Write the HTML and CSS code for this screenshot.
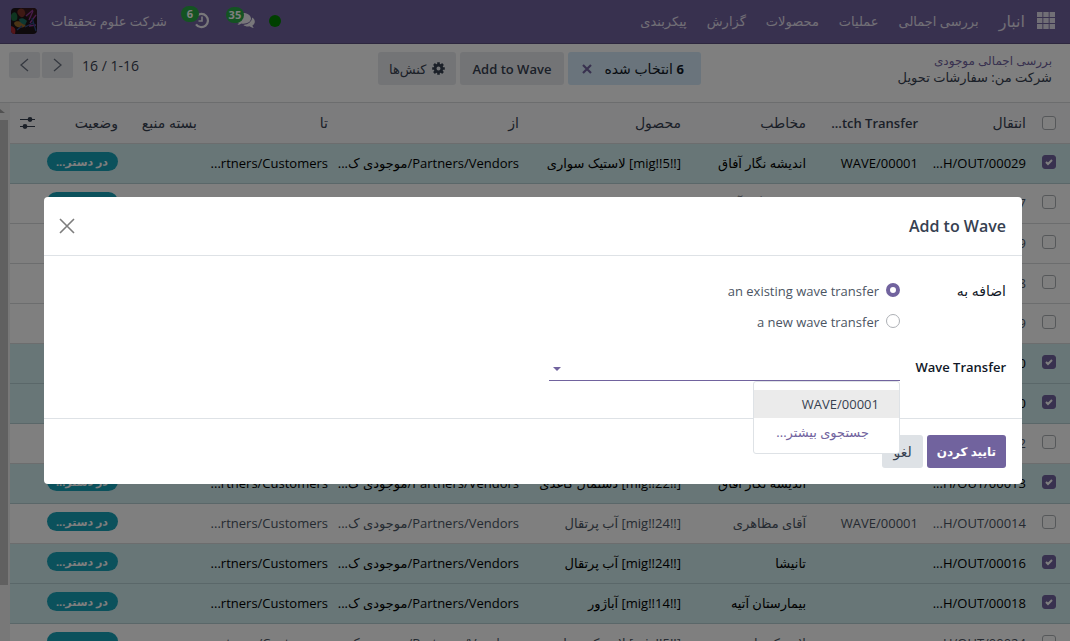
FILE: index.html
```html
<!DOCTYPE html>
<html lang="fa" dir="rtl">
<head>
<meta charset="utf-8">
<title>انبار</title>
<link rel="stylesheet" href="styles.css">
</head>
<body>
<div class="app">
<header class="navbar">
  <button class="apps" aria-label="برنامه‌ها"><svg width="18" height="17" viewBox="0 0 18 17"><path fill="currentColor" d="M0 0h5.400v5H0zM6.300 0h5.400v5H6.300zM12.600 0H18v5h-5.400zM0 6h5.400v5H0zM6.300 6h5.400v5H6.300zM12.600 6H18v5h-5.400zM0 12h5.400v5H0zM6.300 12h5.400v5H6.300zM12.600 12H18v5h-5.400z"/></svg></button>
  <a class="brand" href="#">انبار</a>
  <nav class="menu">
    <a href="#">بررسی اجمالی</a>
    <a href="#">عملیات</a>
    <a href="#">محصولات</a>
    <a href="#">گزارش</a>
    <a href="#">پیکربندی</a>
  </nav>
  <div class="systray">
    <span class="online"></span>
    <button class="tray" aria-label="پیام‌ها"><svg width="19" height="16" viewBox="0 0 19 16"><path fill="currentColor" d="M7.500 0C3.400 0 0 2.500 0 5.600c0 1.800 1.100 3.300 2.800 4.300-.3.900-.8 1.500-1.400 2.100 1.600 0 3-.6 4-1.400.7.100 1.400.2 2.100.2 4.100 0 7.500-2.300 7.500-5.200S11.600 0 7.500 0z"/><path fill="currentColor" d="M16 4.600c.2 4-4 7.100-8.600 7.300 1.200 1 2.900 1.600 4.900 1.500l1.200-.1c1.100.9 2.500 1.500 4.300 1.600-.7-.7-1.200-1.400-1.400-2.300 3.300-2 3.300-6-.4-8z"/></svg><span class="count">35</span></button>
    <button class="tray" aria-label="فعالیت‌ها"><svg width="17" height="17" viewBox="0 0 17 17"><path fill="none" stroke="currentColor" stroke-width="2.200" d="M3.500 4A6.600 6.600 0 1 1 3 12.300"/><path fill="none" stroke="currentColor" stroke-width="1.600" d="M9 4.500V9H5.500"/></svg><span class="count">6</span></button>
    <a class="company" href="#">شرکت علوم تحقیقات</a>
    <svg class="avatar" width="26" height="26" viewBox="0 0 26 26"><rect width="26" height="26" fill="#1d1418"/><path d="M12 0h14v8l-7 3-6-4z" fill="#35191f"/><path d="M0 7c3-4 5-3 6 0s0 6-3 6-3-3-3-6z" fill="#1f6b41"/><path d="M7 2c4-3 6-1 7 2s-2 6-4 5-5-4-3-7z" fill="#7c3228"/><path d="M3 15c3-3 5-1 8-1 3 1 5 4 2 5s-9 1-10-4z" fill="#96692b"/><path d="M0 18c4 1 5 3 4 8H0z" fill="#a82a35"/><path d="M8 11c4-2 6 0 8 2l-2 4c-3-1-6-3-6-6z" fill="#1c6f63"/><path d="M18 12l4-9M19 15l6-8M18 18l7-1M15 8l7-6" stroke="#8d3794" stroke-width="1.300" fill="none"/><path d="M14 19l8-4M21 10l4 13M6 22l5-4" stroke="#2f4a88" stroke-width="1.300" fill="none"/></svg>
  </div>
</header>

<section class="control">
  <div class="crumbs">
    <a href="#">بررسی اجمالی موجودی</a>
    <span>شرکت من: سفارشات تحویل</span>
  </div>
  <div class="actions">
    <div class="selection"><span><b>6</b> انتخاب شده</span><button aria-label="لغو انتخاب"><svg width="10" height="10" viewBox="0 0 10 10"><path d="M1 1l8 8M9 1L1 9" stroke="currentColor" stroke-width="2.200"/></svg></button></div>
    <button class="btn latin">Add to Wave</button>
    <button class="btn"><svg width="13" height="13" viewBox="-6.500 -6.500 13 13"><circle r="3.400" fill="none" stroke="currentColor" stroke-width="2.800"/><path d="M0-6.300V-4M0 6.300V4M-6.300 0H-4M6.300 0H4M-4.500-4.500L-3-3M4.500 4.500L3 3M-4.500 4.500L-3 3M4.500-4.500L3-3" stroke="currentColor" stroke-width="2.600"/></svg>کنش‌ها</button>
  </div>
  <div class="pager">
    <span>1-16 / 16</span>
    <div class="steps">
      <button aria-label="قبلی"><svg width="9" height="14" viewBox="0 0 9 14"><path d="M1 1l7 6-7 6" fill="none" stroke="currentColor" stroke-width="1.300"/></svg></button>
      <button aria-label="بعدی"><svg width="9" height="14" viewBox="0 0 9 14"><path d="M8 1L1 7l7 6" fill="none" stroke="currentColor" stroke-width="1.300"/></svg></button>
    </div>
  </div>
</section>

<main class="content">
<table class="list">
<colgroup><col class="c-check"><col class="c-name"><col class="c-batch"><col class="c-partner"><col class="c-product"><col class="c-from"><col class="c-to"><col class="c-package"><col class="c-state"><col class="c-options"></colgroup>
<thead><tr><th><input type="checkbox" aria-label="انتخاب همه"></th><th>انتقال</th><th class="latin">tch Transfer...</th><th>مخاطب</th><th>محصول</th><th>از</th><th>تا</th><th>بسته منبع</th><th>وضعیت</th><th><button class="options" aria-label="ستون‌ها"><svg width="15" height="12" viewBox="0 0 15 12"><path d="M0 2.500h15M0 9.500h15" stroke="currentColor" stroke-width="1.200"/><circle cx="10" cy="2.500" r="2.400" fill="currentColor"/><circle cx="5" cy="9.500" r="2.400" fill="currentColor"/></svg></button></th></tr></thead>
<tbody>
<tr class="selected"><td><input type="checkbox" aria-label="00029" checked></td><td>H/OUT/00029...</td><td>WAVE/00001</td><td>اندیشه نگار آفاق</td><td>[!!mig!!5] لاستیک سواری</td><td>Partners/Vendors/موجودی ک...</td><td>rtners/Customers...</td><td></td><td><span class="badge">در دستر...</span></td><td></td></tr>
<tr><td><input type="checkbox" aria-label="00007"></td><td>H/OUT/00007...</td><td></td><td>اندیشه نگار آفاق</td><td></td><td></td><td></td><td></td><td><span class="badge">در دستر...</span></td><td></td></tr>
<tr><td><input type="checkbox" aria-label="00009"></td><td>H/OUT/00009...</td><td></td><td></td><td></td><td></td><td></td><td></td><td></td><td></td></tr>
<tr><td><input type="checkbox" aria-label="00008"></td><td>H/OUT/00008...</td><td></td><td></td><td></td><td></td><td></td><td></td><td></td><td></td></tr>
<tr><td><input type="checkbox" aria-label="00019"></td><td>H/OUT/00019...</td><td></td><td></td><td></td><td></td><td></td><td></td><td></td><td></td></tr>
<tr class="selected"><td><input type="checkbox" aria-label="00020" checked></td><td>H/OUT/00020...</td><td></td><td></td><td></td><td></td><td></td><td></td><td></td><td></td></tr>
<tr class="selected"><td><input type="checkbox" aria-label="00010" checked></td><td>H/OUT/00010...</td><td></td><td></td><td></td><td></td><td></td><td></td><td></td><td></td></tr>
<tr><td><input type="checkbox" aria-label="00012"></td><td>H/OUT/00012...</td><td></td><td></td><td></td><td></td><td></td><td></td><td></td><td></td></tr>
<tr class="selected"><td><input type="checkbox" aria-label="00013" checked></td><td>H/OUT/00013...</td><td></td><td>اندیشه نگار آفاق</td><td>[!!mig!!22] دستمال کاغذی</td><td>Partners/Vendors/موجودی ک...</td><td>rtners/Customers...</td><td></td><td><span class="badge">در دستر...</span></td><td></td></tr>
<tr><td><input type="checkbox" aria-label="00014"></td><td>H/OUT/00014...</td><td>WAVE/00001</td><td>آقای مظاهری</td><td>[!!mig!!24] آب پرتقال</td><td>Partners/Vendors/موجودی ک...</td><td>rtners/Customers...</td><td></td><td><span class="badge">در دستر...</span></td><td></td></tr>
<tr class="selected"><td><input type="checkbox" aria-label="00016" checked></td><td>H/OUT/00016...</td><td></td><td>تانیشا</td><td>[!!mig!!24] آب پرتقال</td><td>Partners/Vendors/موجودی ک...</td><td>rtners/Customers...</td><td></td><td><span class="badge">در دستر...</span></td><td></td></tr>
<tr class="selected"><td><input type="checkbox" aria-label="00018" checked></td><td>H/OUT/00018...</td><td></td><td>بیمارستان آتیه</td><td>[!!mig!!14] آباژور</td><td>Partners/Vendors/موجودی ک...</td><td>rtners/Customers...</td><td></td><td><span class="badge">در دستر...</span></td><td></td></tr>
<tr><td><input type="checkbox" aria-label="00024"></td><td>H/OUT/00024...</td><td></td><td>لاستیک ما</td><td>[!!mig!!5] لاستیک سواری</td><td>Partners/Vendors/موجودی ک...</td><td>rtners/Customers...</td><td></td><td><span class="badge">در دستر...</span></td><td></td></tr>
</tbody>
</table>
<div class="scrollbar"><svg width="10" height="17" viewBox="0 0 10 17"><path d="M0 6l5 4H-5z" fill="#a3a3a3"/></svg><div class="thumb"></div></div>
</main>
</div>

<div class="overlay">
<form class="modal" role="dialog" aria-labelledby="modal-title">
  <header class="modal-head">
    <h1 id="modal-title">Add to Wave</h1>
    <button type="button" class="close" aria-label="بستن"><svg width="16" height="16" viewBox="0 0 16 16"><path d="M1 1l14 14M15 1L1 15" stroke="currentColor" stroke-width="1.600"/></svg></button>
  </header>
  <div class="modal-body">
    <span class="label" id="mode">اضافه به</span>
    <div class="radios" role="radiogroup" aria-labelledby="mode">
      <label><input type="radio" name="mode" checked>an existing wave transfer</label>
      <label><input type="radio" name="mode">a new wave transfer</label>
    </div>
    <label class="label latin" for="wave">Wave Transfer</label>
    <div class="combo">
      <input id="wave" type="text" autocomplete="off">
      <svg class="caret" width="8" height="4" viewBox="0 0 8 4"><path d="M0 0h8L4 4z" fill="currentColor"/></svg>
      <ul class="dropdown">
        <li><a class="option active" href="#">WAVE/00001</a></li>
        <li><a class="option more" href="#">جستجوی بیشتر...</a></li>
      </ul>
    </div>
  </div>
  <footer class="modal-foot">
    <button type="submit" class="btn primary">تایید کردن</button>
    <button type="button" class="btn cancel">لغو</button>
  </footer>
</form>
</div>
</body>
</html>
```
FILE: styles.css
```css
* { box-sizing: border-box; }
body {
  margin: 0;
  font: 13px/20px "Open Sans", "DejaVu Sans", sans-serif;
  color: #111827;
  background: #fff;
}
a { color: inherit; text-decoration: none; }
button { font: inherit; color: inherit; border: 0; padding: 0; background: none; }
svg { display: block; flex: none; }
input { margin: 0; }

.app { height: 100vh; overflow: hidden; display: flex; flex-direction: column; }

.navbar {
  flex: none;
  height: 44px;
  display: flex;
  align-items: center;
  padding: 0 15px 2px 11px;
  background: #71639e;
  border-bottom: 1px solid #5a4f7f;
  color: #e2dfec;
}
.brand { font-size: 16px; margin: 0 12px 0 20px; }
.menu { display: flex; gap: 20px; }
.systray { margin-right: auto; display: flex; align-items: center; gap: 14px; }
.online { width: 12px; height: 12px; border-radius: 50%; background: #008000; }
.tray { position: relative; margin-left: 12px; color: #f0eff5; }
.count {
  position: absolute;
  top: -6px;
  right: 11px;
  min-width: 18px;
  padding: 0 2px;
  border-radius: 8px;
  background: #28a745;
  color: #fff;
  font: bold 11px/16px "Open Sans", sans-serif;
}
.avatar { border-radius: 4px; }

.control {
  flex: none;
  height: 59px;
  display: grid;
  grid-template-columns: 1fr auto 1fr;
  padding: 8px 18px 0 9px;
  border-bottom: 1px solid #d8dadd;
}
.crumbs { display: flex; flex-direction: column; line-height: 17px; }
.crumbs a { color: #71639e; font-size: 12px; font-weight: 500; -webkit-text-stroke: 1px #71639e; paint-order: stroke; }
.crumbs a { -webkit-text-stroke: 0; }
.crumbs span { color: #374151; }
.actions { display: flex; gap: 4px; height: 33px; margin-left: 18px; }
.selection {
  display: flex;
  align-items: center;
  gap: 12px;
  padding: 0 17px 0 14px;
  border-radius: 3px;
  background: #d4e9f8;
  font-size: 14px;
}
.selection b { font-size: 13px; }
.selection button { color: #71639e; }
.btn {
  height: 33px;
  display: flex;
  align-items: center;
  gap: 5px;
  padding: 0 11px;
  border-radius: 3px;
  background: #e7e9ed;
  color: #374151;
  font-weight: 500;
}
.btn.latin { padding: 0 13px; font-weight: 600; }
.pager { display: flex; justify-content: flex-end; gap: 9px; color: #374151; height: 26px; align-items: center; }
.pager > span { padding-top: 2px; font-size: 14px; }
.steps { display: flex; gap: 2px; }
.steps button { width: 31px; height: 26px; display: grid; place-items: center; background: #e7e9ed; border-radius: 2px; color: #6b7280; }

.content { flex: 1; min-height: 0; overflow: hidden; display: flex; align-items: stretch; }
.list { flex: 1; min-width: 0; width: 100%; height: max-content; table-layout: fixed; border-collapse: separate; border-spacing: 0; }
.c-check { width: 39px; }
.c-name { width: 108px; }
.c-batch { width: 112px; }
.c-partner { width: 125px; }
.c-product { width: 162px; }
.c-from { width: 191px; }
.c-to { width: 131px; }
.c-package { width: 79px; }
.c-state { width: 81px; }
.c-options { width: 32px; }
.list th, .list td { height: 40px; padding: 0 5px 2px; text-align: right; white-space: nowrap; border-bottom: 1px solid #d8dadd; overflow: hidden; }
.list th { height: 41px; padding-bottom: 0; background: #f9f8fb; font-size: 14px; font-weight: 500; color: #374151; }
.list th.latin { font-size: 13px; font-weight: 600; }
.list td { color: #4b5563; }
.list .selected td { background: #d1ecee; color: #000; border-bottom-color: #b4cfd2; }
.list th:first-child, .list td:first-child { padding-right: 14px; }
.list td input { margin-bottom: 2px; }
.options { display: block; margin-right: 2px; }

input[type="checkbox"], input[type="radio"] {
  appearance: none;
  display: block;
  flex: none;
  width: 14px;
  height: 14px;
  border: 1px solid #adb0b5;
  border-radius: 3px;
  background: #fff center no-repeat;
}
input[type="checkbox"]:checked {
  border-color: #71639e;
  background-color: #71639e;
  background-image: url("data:image/svg+xml,%3Csvg xmlns='http://www.w3.org/2000/svg' width='10' height='10'%3E%3Cpath d='M2 5l2 2 4-4' fill='none' stroke='white' stroke-width='2'/%3E%3C/svg%3E");
}
input[type="radio"] { border-radius: 50%; margin-bottom: 2px; }
input[type="radio"]:checked { border: 4px solid #71639e; }

.badge {
  display: block;
  height: 19px;
  padding: 0 10px;
  border-radius: 10px;
  background: #17a2b8;
  color: #fff;
  font-size: 11px;
  line-height: 19px;
  font-weight: bold;
  text-align: center;
  margin-bottom: 2px;
}

.scrollbar { width: 10px; flex: none; background: #f1f1f1; }
.thumb { height: 465px; margin-right: 2px; background: #c1c1c1; }

.overlay {
  position: fixed;
  inset: 0;
  padding: 197px 48px 0 44px;
  background: rgba(0, 0, 0, .5);
}
.modal { border-radius: 4px; background: #fff; }
.modal-head {
  height: 59px;
  display: flex;
  align-items: center;
  justify-content: space-between;
  padding: 0 16px 0 15px;
  border-bottom: 1px solid #dee2e6;
}
.modal-head h1 { margin: 0; font-size: 16px; font-weight: 600; color: #374151; }
.close { color: #7d7d7d; }
.modal-body {
  display: grid;
  grid-template-columns: 106px 351px;
  padding: 25px 16px 37px;
  row-gap: 25px;
}
.label { font-size: 14px; font-weight: 500; }
.label.latin { font-size: 13px; font-weight: 600; }
.radios { display: flex; flex-direction: column; gap: 11px; }
.radios label { display: flex; align-items: center; gap: 7px; color: #4b5563; }
.combo { position: relative; height: 24px; }
.combo input {
  width: 100%;
  height: 24px;
  border: 0;
  border-bottom: 1px solid #71639e;
  outline: 0;
  font: inherit;
  background: none;
}
.caret { position: absolute; left: 4px; top: 10px; color: #71639e; }
.dropdown {
  position: absolute;
  top: 24px;
  right: 0;
  width: 147px;
  margin: 0;
  padding: 8px 0 7px;
  list-style: none;
  background: #fff;
  border: 1px solid #dee2e6;
  border-radius: 3px;
}
.option { display: block; padding: 4px 20px; line-height: 20px; color: #374151; }
.option.active { background: #ebebeb; }
.option.more { padding-right: 30px; color: #71639e; }
.modal-foot {
  display: flex;
  gap: 4px;
  padding: 16px;
  border-top: 1px solid #dee2e6;
}
.btn.primary { padding: 0 10px; background: #71639e; color: #fff; font-size: 12px; font-weight: bold; }
.btn.cancel { background: #dee2e6; font-size: 14px; }
```
